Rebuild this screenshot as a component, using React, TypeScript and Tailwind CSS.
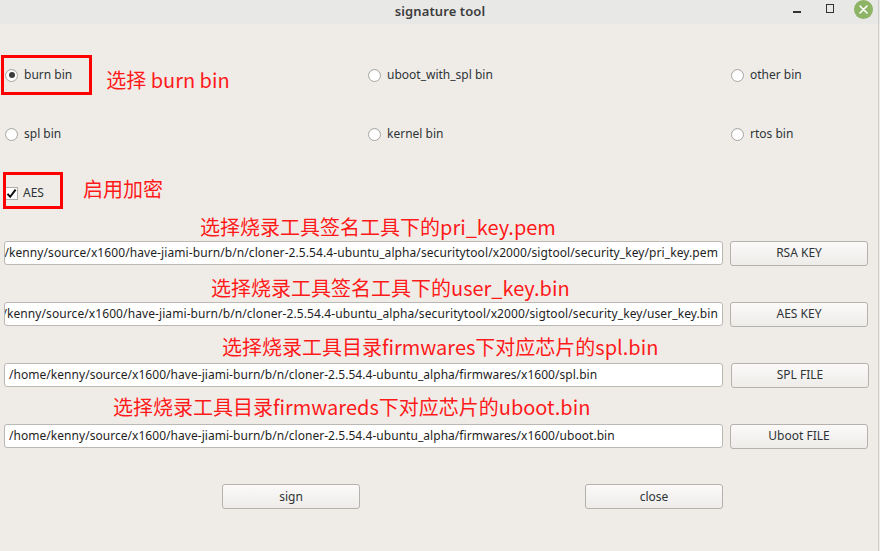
import React from "react";

const ui = { fontFamily: '"Noto Sans", "Open Sans", sans-serif' };
const red = { fontFamily: '"Noto Sans CJK SC", "Noto Sans", sans-serif' };

function Radio({ checked, label }: { checked?: boolean; label: string }) {
  return (
    <div className="flex items-center">
      <div className="w-[13px] h-[13px] rounded-full border border-[#a8a6a3] bg-white flex items-center justify-center shadow-[inset_0_1px_1px_rgba(0,0,0,0.06)]">
        {checked && <div className="w-[6px] h-[6px] rounded-full bg-[#3c3c3c]" />}
      </div>
      <span className="ml-[6px] text-[12px] text-[#2e3436] leading-none">{label}</span>
    </div>
  );
}

function Btn({ label, className = "" }: { label: string; className?: string }) {
  return (
    <div
      className={
        "h-[25px] w-[138px] rounded-[3px] border border-[#b5b1ad] bg-gradient-to-b from-[#fbfaf9] to-[#eeece9] flex items-center justify-center text-[12px] text-[#2e3436] " +
        className
      }
    >
      {label}
    </div>
  );
}

function Field({ text, end }: { text: string; end?: boolean }) {
  return (
    <div
      className={
        "ml-[4px] w-[719px] h-[24px] bg-white border border-[#bcb8b4] rounded-[3px] flex items-center overflow-hidden whitespace-nowrap text-[12px] text-[#1e1e1e] " +
        (end ? "justify-end pr-[4px] tracking-[0.09px]" : "pl-[4px] tracking-[0.04px]")
      }
    >
      <span className="shrink-0">{text}</span>
    </div>
  );
}

function Note({ text, left, className = "" }: { text: string; left: number; className?: string }) {
  return (
    <div
      className={"h-[24px] leading-[24px] text-[20px] text-[#ff1a1a] whitespace-nowrap " + className}
      style={{ ...red, paddingLeft: left }}
    >
      {text}
    </div>
  );
}

export default function App() {
  const base = "/home/kenny/source/x1600/have-jiami-burn/b/n/cloner-2.5.54.4-ubuntu_alpha";
  return (
    <div className="w-[880px] h-[551px] bg-[#efece8] overflow-hidden relative" style={ui}>
      {/* title bar */}
      <div className="h-[24px] bg-[#e8e8e7] relative flex items-center justify-center">
        <span className="text-[13px] font-semibold text-[#3c3c3c] tracking-[0.1px]">signature tool</span>
        <div className="absolute left-[793px] top-[11px] w-[8px] h-[1.5px] bg-[#333]" />
        <div className="absolute left-[826px] top-[4px] w-[8px] h-[9px] border-[1.5px] border-[#333]" />
        <div className="absolute left-[854px] top-[0px] w-[19px] h-[19px] rounded-full bg-[#8db365] flex items-center justify-center">
          <svg width="9" height="9" viewBox="0 0 9 9">
            <path d="M1 1 L8 8 M8 1 L1 8" stroke="white" strokeWidth="1.6" strokeLinecap="round" />
          </svg>
        </div>
      </div>
      <div className="absolute right-[1px] top-0 w-px h-full bg-[#cfcdca]" />

      {/* radio row 1 */}
      <div className="mt-[31px] h-[40px] flex items-center relative">
        <div className="absolute left-[1px] top-0 w-[91px] h-[40px] border-[3px] border-[#ff0000]" />
        <div className="w-[368px] pl-[5px] flex items-center">
          <Radio checked label="burn bin" />
          <span className="ml-[34px] mt-[10px] text-[20px] text-[#ff1a1a] whitespace-nowrap" style={red}>
            选择 burn bin
          </span>
        </div>
        <div className="w-[363px] pl-[0px]">
          <Radio label="uboot_with_spl bin" />
        </div>
        <Radio label="other bin" />
      </div>

      {/* radio row 2 */}
      <div className="mt-[19px] h-[40px] flex items-center">
        <div className="w-[368px] pl-[5px]">
          <Radio label="spl bin" />
        </div>
        <div className="w-[363px]">
          <Radio label="kernel bin" />
        </div>
        <Radio label="rtos bin" />
      </div>

      {/* AES row */}
      <div className="mt-[18px] h-[40px] flex items-center relative">
        <div className="absolute left-[3px] top-[0px] w-[60px] h-[37px] border-[3px] border-[#ff0000]" />
        <div className="ml-[5px] mt-[2px] w-[13px] h-[13px] border border-[#b0aeab] bg-white flex items-center justify-center">
          <svg width="11" height="11" viewBox="0 0 11 11">
            <path d="M1.5 5.8 L4.2 8.8 L9.6 1.6" stroke="#111" strokeWidth="2" fill="none" />
          </svg>
        </div>
        <span className="ml-[5px] mt-[2px] text-[12px] text-[#2e3436]">AES</span>
        <span className="ml-[39px] -mt-[6px] text-[20px] text-[#ff1a1a] whitespace-nowrap" style={red}>
          启用加密
        </span>
      </div>

      <Note className="mt-[3px]" left={200} text="选择烧录工具签名工具下的pri_key.pem" />
      <div className="mt-[1px] h-[26px] flex items-center">
        <Field end text={base + "/securitytool/x2000/sigtool/security_key/pri_key.pem"} />
        <Btn className="ml-[7px]" label="RSA KEY" />
      </div>

      <Note className="mt-[10px]" left={211} text="选择烧录工具签名工具下的user_key.bin" />
      <div className="mt-[1px] h-[26px] flex items-center">
        <Field end text={base + "/securitytool/x2000/sigtool/security_key/user_key.bin"} />
        <Btn className="ml-[7px]" label="AES KEY" />
      </div>

      <Note className="mt-[8px]" left={222} text="选择烧录工具目录firmwares下对应芯片的spl.bin" />
      <div className="mt-[3px] h-[26px] flex items-center">
        <Field text={base + "/firmwares/x1600/spl.bin"} />
        <Btn className="ml-[8px]" label="SPL FILE" />
      </div>

      <Note className="mt-[7px]" left={113} text="选择烧录工具目录firmwareds下对应芯片的uboot.bin" />
      <div className="mt-[4px] h-[26px] flex items-center">
        <Field text={base + "/firmwares/x1600/uboot.bin"} />
        <Btn className="ml-[7px]" label="Uboot FILE" />
      </div>

      <div className="mt-[35px] flex">
        <Btn className="ml-[222px]" label="sign" />
        <Btn className="ml-[225px]" label="close" />
      </div>
    </div>
  );
}
